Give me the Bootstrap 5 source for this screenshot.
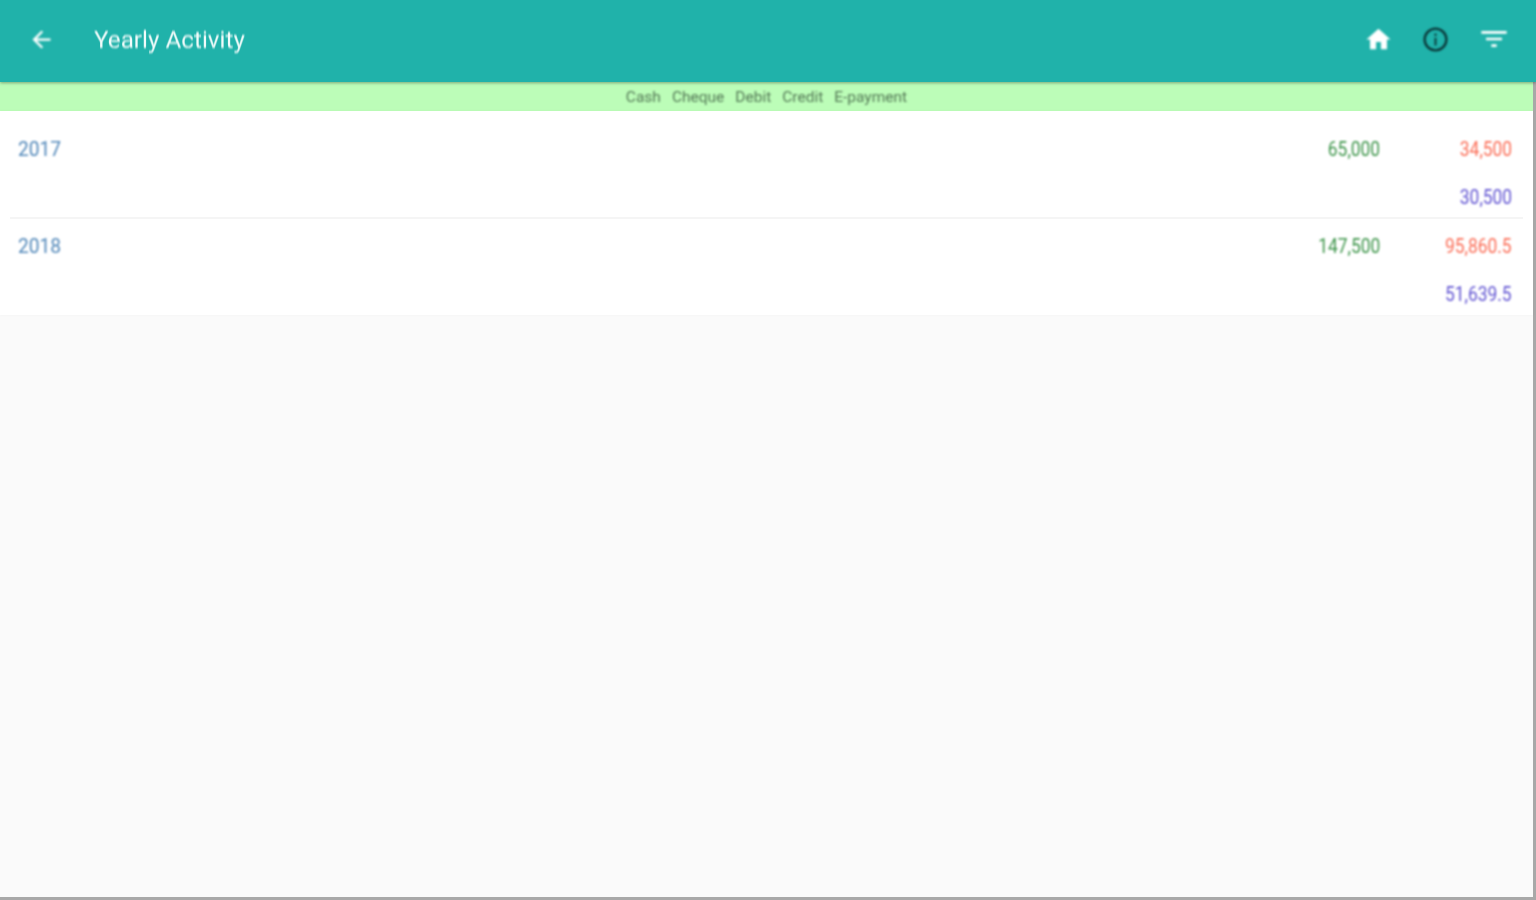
<!DOCTYPE html>
<html lang="en">
<head>
<meta charset="utf-8">
<title>Yearly Activity</title>
<link href="https://cdn.jsdelivr.net/npm/bootstrap@5.3.0/dist/css/bootstrap.min.css" rel="stylesheet">
<style>
html,body{height:100%;overflow:hidden}
body{background:#fafafa;font-family:Roboto,"Liberation Sans",sans-serif}
.app-frame{height:900px;width:1536px;border-right:3px solid #a8a8a8;border-bottom:3px solid #a8a8a8;background:#fafafa}
.app-bar{height:82px;margin-right:-3px;background:#20b2aa;box-shadow:0 1px 3px rgba(0,0,0,.35);position:relative;z-index:2;padding:0 26px 4px 28px}
.app-title{color:#f0fbfa;font-size:24.5px;line-height:1;margin-left:39px;padding-top:3px;filter:blur(.8px);transform:scaleX(.99);transform-origin:left center}
.soft-icon{filter:blur(.8px);display:block}
.icon-gap{gap:28px}
.legend-band{height:29px;background:#bcfdb8;color:#557a57;font-size:15.5px;gap:11px;padding-top:2px}
.legend-band span{display:inline-block;filter:blur(.8px)}
.year-list{background:#fff;box-shadow:0 0 3px rgba(0,0,0,.04)}
.year-row{display:flex;flex-direction:column;gap:18px}
.first-row{height:108px;padding:23px 11px 0 8px;border-bottom:2px solid #f5f5f5;margin:0 10px}
.second-row{height:96px;padding:12px 21px 0 18px}
.row-line{height:30px;display:flex;align-items:center;font-size:20px;filter:blur(.8px)}
.year-label{color:#4f86b8;margin-right:auto;display:inline-block;transform:scaleX(.96);transform-origin:left center}
.amt-in{color:#3a9347;text-align:right;width:132px}
.amt-out{color:#fb6c55;text-align:right;width:132px}
.amt-net{color:#6154d2;text-align:right;margin-left:auto}
.num-fit{display:inline-block;transform:scaleX(.87);transform-origin:right center;white-space:nowrap}
</style>
</head>
<body>
<div class="app-frame">
  <header class="app-bar d-flex align-items-center">
    <svg class="soft-icon" width="27" height="27" viewBox="0 0 24 24" fill="#fff" aria-label="Back"><path d="M20 11H7.83l5.59-5.590L12 4l-8 8 8 8 1.41-1.410L7.830 13H20v-2z"/></svg>
    <div class="app-title flex-grow-1">Yearly Activity</div>
    <div class="d-flex align-items-center icon-gap">
      <svg class="soft-icon" width="29" height="29" viewBox="0 0 24 24" fill="#fff" aria-label="Home"><path d="M10 20v-6h4v6h5v-8h3L12 3 2 12h3v8z"/></svg>
      <svg class="soft-icon" width="29" height="29" viewBox="0 0 24 24" fill="#0b3a3b" aria-label="Info"><path d="M12 2a10 10 0 1 0 0 20 10 10 0 0 0 0-20zm0 18a8 8 0 1 1 0-16 8 8 0 0 1 0 16z"/><path d="M11.200 10.500h1.600v6.500h-1.600zM11.200 7h1.600v2h-1.600z"/></svg>
      <svg class="soft-icon" width="32" height="32" viewBox="0 0 24 24" fill="#fff" aria-label="Filter"><path d="M10 18h4v-2h-4v2zM2.500 6v2h19V6h-19zm3.500 7h12v-2H6v2z"/></svg>
    </div>
  </header>
  <div class="legend-band d-flex justify-content-center align-items-center">
    <span>Cash</span><span>Cheque</span><span>Debit</span><span>Credit</span><span>E-payment</span>
  </div>
  <main class="year-list">
    <div class="year-row first-row">
      <div class="row-line"><span class="year-label">2017</span><span class="amt-in"><span class="num-fit">65,000</span></span><span class="amt-out"><span class="num-fit">34,500</span></span></div>
      <div class="row-line"><span class="amt-net"><span class="num-fit">30,500</span></span></div>
    </div>
    <div class="year-row second-row">
      <div class="row-line"><span class="year-label">2018</span><span class="amt-in"><span class="num-fit">147,500</span></span><span class="amt-out"><span class="num-fit">95,860.5</span></span></div>
      <div class="row-line"><span class="amt-net"><span class="num-fit">51,639.5</span></span></div>
    </div>
  </main>
</div>
<script src="https://cdn.jsdelivr.net/npm/bootstrap@5.3.0/dist/js/bootstrap.bundle.min.js"></script>
</body>
</html>
